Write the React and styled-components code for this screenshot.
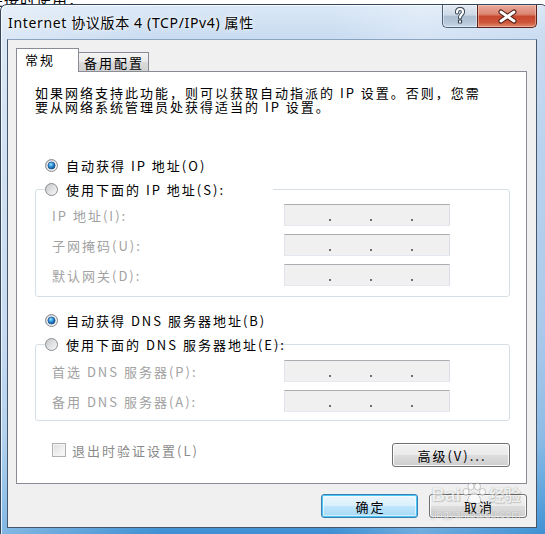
import React from 'react';
import styled, { createGlobalStyle, css } from 'styled-components';

const GlobalStyle = createGlobalStyle`
  html, body { margin: 0; padding: 0; background: #ffffff; }
  body {
    width: 545px; height: 534px; overflow: hidden;
    font-family: "Noto Sans CJK SC", "Noto Sans", sans-serif;
  }
`;

const Desktop = styled.div`
  position: relative;
  width: 545px;
  height: 534px;
  overflow: hidden;
  background: #ffffff;
`;

const BehindText = styled.div`
  position: absolute;
  left: -12px;
  top: -12px;
  font-size: 15px;
  letter-spacing: 1px;
  color: #000;
  white-space: nowrap;
`;

const Window = styled.div`
  position: absolute;
  left: 0;
  top: 4px;
  width: 548px;
  height: 545px;
  box-sizing: border-box;
  border: 1px solid #33465c;
  border-radius: 7px 7px 0 0;
  background:
    linear-gradient(90deg, rgba(255,255,255,0.35) 0px, rgba(255,255,255,0) 160px, rgba(255,255,255,0) 330px, rgba(255,255,255,0.25) 420px, rgba(255,255,255,0) 548px),
    linear-gradient(180deg, #dbe8f6 0px, #c8dbf1 34px, #bad2ee 140px, #a9c8ea 330px, #8cbbe6 430px, #5ea4dd 490px, #3f90d3 528px);
  box-shadow: inset 1px 1px 0 rgba(255,255,255,0.75);
  display: flex;
  flex-direction: column;
`;

const TitleBar = styled.div`
  height: 34px;
  display: flex;
  justify-content: space-between;
  padding-left: 7px;
`;

const TitleText = styled.div`
  align-self: center;
  font-family: "Noto Sans", "Noto Sans CJK SC", sans-serif;
  font-size: 14px;
  letter-spacing: 0.65px;
  color: #000;
  white-space: nowrap;
  text-shadow: 0 0 6px rgba(255,255,255,0.9), 0 0 2px rgba(255,255,255,0.9);
  margin-top: -1px;
`;

const CaptionButtons = styled.div`
  display: flex;
  align-self: flex-start;
  margin-right: 10px;
`;

const CaptionButton = styled.div`
  box-sizing: border-box;
  height: 23px;
  display: flex;
  align-items: center;
  justify-content: center;
  border: 1px solid;
  border-top: none;
  ${(p) =>
    p.$close
      ? css`
          width: 60px;
          border-color: #5e2218;
          border-radius: 0 0 5px 0;
          background: linear-gradient(180deg, #e9aa9c 0%, #dc8571 42%, #c8482f 52%, #cc5438 78%, #e08a6e 100%);
          box-shadow: inset 0 0 0 1px rgba(255,220,210,0.45);
        `
      : css`
          width: 35px;
          border-color: #4f5f75;
          border-right: none;
          border-radius: 0 0 0 5px;
          background: linear-gradient(180deg, #e3ebf4 0%, #cdd9e6 45%, #aebfd3 52%, #b6c7da 80%, #cbd9e8 100%);
          box-shadow: inset 0 0 0 1px rgba(255,255,255,0.45);
        `}
`;

const Client = styled.div`
  box-sizing: border-box;
  margin: 0 10px 0 6px;
  height: 489px;
  border: 1px solid #46576c;
  border-top-color: #8aa3bf;
  background: #f0f0f0;
  display: flex;
  flex-direction: column;
  padding: 8px 9px 9px 8px;
`;

const TabStrip = styled.div`
  position: relative;
  z-index: 1;
  height: 23px;
  display: flex;
  align-items: flex-end;
`;

const textBase = css`
  font-family: "Noto Sans CJK SC", sans-serif;
  font-size: 13px;
  letter-spacing: 2px;
  white-space: nowrap;
`;

const Tab = styled.div`
  ${textBase};
  box-sizing: border-box;
  border: 1px solid #898c95;
  border-bottom: none;
  display: flex;
  align-items: center;
  color: #000;
  ${(p) =>
    p.$active
      ? css`
          width: 63px;
          height: 24px;
          margin-bottom: -1px;
          padding: 0 0 3px 8px;
          background: #ffffff;
        `
      : css`
          width: 71px;
          height: 19px;
          margin-left: -1px;
          padding: 0 0 0 5px;
          background: linear-gradient(180deg, #f4f4f4 0%, #e9e9e9 50%, #dadada 52%, #d2d2d2 100%);
        `}
`;

const Panel = styled.div`
  box-sizing: border-box;
  height: 413px;
  border: 1px solid #898c95;
  background: #ffffff;
  padding: 14px 16px 0 18px;
  display: flex;
  flex-direction: column;
`;

const Description = styled.div`
  ${textBase};
  line-height: 14px;
  color: #000;
  margin-bottom: 39px;
`;

const RadioRow = styled.div`
  ${textBase};
  height: 24px;
  display: flex;
  align-items: center;
  gap: 8px;
  padding-left: 10px;
  color: #000;
  margin-top: ${(p) => p.$mt || 0}px;
`;

const GroupBox = styled.fieldset`
  margin: 0;
  min-inline-size: 0;
  border: 1px solid #d5dfe5;
  border-radius: 3px;
  padding: ${(p) => p.$pt}px 0 ${(p) => p.$pb}px 9px;
`;

const GroupLegend = styled.legend`
  ${textBase};
  box-sizing: border-box;
  width: 228px;
  height: 24px;
  padding: 0;
  display: flex;
  align-items: center;
  gap: 8px;
  color: #000;
  background: #fff;
`;

const FieldGrid = styled.div`
  display: grid;
  grid-template-columns: 232px 166px;
  row-gap: 8px;
  align-items: center;
  padding-left: 7px;
`;

const FieldLabel = styled.div`
  ${textBase};
  color: #a2a2a2;
`;

const IPField = styled.div`
  box-sizing: border-box;
  height: 22px;
  border: 1px solid;
  border-color: #abadb3 #dbdfe6 #e3e9ef #e2e3ea;
  background: #f0f0f0;
  display: flex;
  padding-left: 5px;
`;

const Octet = styled.div`
  width: 39px;
  flex: 0 0 39px;
`;

const Dot = styled.div`
  width: 2px;
  height: 2px;
  flex: 0 0 2px;
  margin-top: 14px;
  background: #6f6f6f;
`;

const BottomRow = styled.div`
  margin-top: 22px;
  display: flex;
  justify-content: space-between;
  align-items: flex-start;
  padding-left: 17px;
`;

const CheckRow = styled.div`
  ${textBase};
  height: 14px;
  display: flex;
  align-items: center;
  gap: 6px;
  color: #8a8a8a;
`;

const CheckBox = styled.div`
  box-sizing: border-box;
  width: 14px;
  height: 14px;
  border: 1px solid #b1b1b1;
  background: linear-gradient(135deg, #dedede 0%, #f0f0f0 60%, #fbfbfb 100%);
  box-shadow: inset 0 0 0 1px #f4f4f4;
`;

const Button = styled.div`
  ${textBase};
  box-sizing: border-box;
  width: ${(p) => p.$w}px;
  height: 24px;
  border: 1px solid #707070;
  border-radius: 3px;
  display: flex;
  align-items: center;
  justify-content: center;
  padding-left: 2px;
  color: #000;
  background: linear-gradient(180deg, #f2f2f2 0%, #ebebeb 49%, #dddddd 51%, #cfcfcf 100%);
  box-shadow: inset 0 0 0 1px rgba(255,255,255,0.85);
  ${(p) =>
    p.$primary &&
    css`
      border-color: #3c7fb1;
      background: linear-gradient(180deg, #eaf6fd 0%, #d9f0fc 49%, #bee6fd 51%, #a7d9f5 100%);
      box-shadow: inset 0 0 0 1px #48c6f5, inset 0 0 0 2px rgba(255,255,255,0.5);
    `}
`;

const ButtonRow = styled.div`
  margin-top: 10px;
  display: flex;
  justify-content: flex-end;
  gap: 11px;
`;

const Watermark = styled.div`
  position: absolute;
  left: 426px;
  top: 470px;
  width: 100px;
  display: flex;
  flex-direction: column;
  align-items: center;
  pointer-events: none;
  opacity: 0.7;
`;

const WatermarkLogo = styled.div`
  display: flex;
  align-items: flex-end;
  height: 36px;
  font-family: "Liberation Sans", sans-serif;
  font-weight: bold;
  font-size: 19px;
  color: rgba(255,255,255,0.9);
  text-shadow: 0 0 1px rgba(0,0,0,0.45), 1px 1px 1px rgba(0,0,0,0.2);
`;

const WatermarkCJK = styled.span`
  font-family: "Noto Sans CJK SC", sans-serif;
  font-size: 16px;
  margin-left: 2px;
`;

const WatermarkUrl = styled.div`
  font-family: "Liberation Sans", sans-serif;
  font-size: 11px;
  margin-top: 2px;
  color: rgba(255,255,255,0.9);
  text-shadow: 0 0 1px rgba(0,0,0,0.5);
`;

const RadioIcon = ({ checked }) => (
  <svg width="13" height="13" viewBox="0 0 13 13" style={{ flex: '0 0 13px' }}>
    <defs>
      <linearGradient id="rbg" x1="0" y1="0" x2="1" y2="1">
        <stop offset="0" stopColor="#c4c6ca" />
        <stop offset="1" stopColor="#fbfbfb" />
      </linearGradient>
      <radialGradient id="rdot" cx="0.4" cy="0.35" r="0.75">
        <stop offset="0" stopColor="#9be2ff" />
        <stop offset="0.45" stopColor="#2b8fd8" />
        <stop offset="1" stopColor="#0b3a74" />
      </radialGradient>
    </defs>
    <circle cx="6.5" cy="6.5" r="6" fill="url(#rbg)" stroke="#8a8c90" strokeWidth="1" />
    <circle cx="6.5" cy="6.5" r="4.6" fill={checked ? '#f8f8f8' : 'none'} />
    {checked && <circle cx="6.5" cy="6.5" r="3.6" fill="url(#rdot)" stroke="#1b4a82" strokeWidth="0.7" />}
  </svg>
);

const HelpIcon = () => (
  <svg width="12" height="18" viewBox="0 0 12 18">
    <path d="M3 5.5 C3 2.5 4.5 2 6 2 C8 2 9 3.3 9 5 C9 7.3 6 7.6 6 10.5" fill="none" stroke="#3b4656" strokeWidth="4.2" strokeLinecap="round" />
    <rect x="3.9" y="12.6" width="4.2" height="4" rx="0.8" fill="#3b4656" />
    <path d="M3 5.5 C3 2.5 4.5 2 6 2 C8 2 9 3.3 9 5 C9 7.3 6 7.6 6 10.5" fill="none" stroke="#ffffff" strokeWidth="2.2" strokeLinecap="round" />
    <rect x="5" y="13.6" width="2" height="2" fill="#ffffff" />
  </svg>
);

const CloseIcon = () => (
  <svg width="21" height="15" viewBox="0 0 21 15">
    <path d="M4 3 L17 12 M17 3 L4 12" stroke="#4a1a12" strokeWidth="5" strokeLinecap="round" />
    <path d="M4 3 L17 12 M17 3 L4 12" stroke="#ffffff" strokeWidth="3" strokeLinecap="round" />
  </svg>
);

const PawIcon = () => (
  <svg width="26" height="24" viewBox="0 0 26 24">
    <g fill="rgba(255,255,255,0.9)" stroke="rgba(0,0,0,0.35)" strokeWidth="0.8">
      <ellipse cx="5" cy="10" rx="3" ry="3.6" />
      <ellipse cx="10" cy="4.5" rx="3" ry="3.6" />
      <ellipse cx="16.5" cy="4.5" rx="3" ry="3.6" />
      <ellipse cx="21.5" cy="10" rx="3" ry="3.6" />
      <path d="M13 11 C9 11 6 17 7 20 C8 23 11 21 13 21 C15 21 18 23 19.5 20 C20.5 17 17 11 13 11 Z" />
    </g>
  </svg>
);

const IPBox = () => (
  <IPField>
    <Octet />
    <Dot />
    <Octet />
    <Dot />
    <Octet />
    <Dot />
    <Octet />
  </IPField>
);

export default function App() {
  return (
    <Desktop>
      <GlobalStyle />
      <BehindText>连接时使用：</BehindText>
      <Window>
        <TitleBar>
          <TitleText>Internet 协议版本 4 (TCP/IPv4) 属性</TitleText>
          <CaptionButtons>
            <CaptionButton>
              <HelpIcon />
            </CaptionButton>
            <CaptionButton $close>
              <CloseIcon />
            </CaptionButton>
          </CaptionButtons>
        </TitleBar>
        <Client>
          <TabStrip>
            <Tab $active>常规</Tab>
            <Tab>备用配置</Tab>
          </TabStrip>
          <Panel>
            <Description>
              如果网络支持此功能，则可以获取自动指派的 IP 设置。否则，您需
              <br />
              要从网络系统管理员处获得适当的 IP 设置。
            </Description>

            <RadioRow>
              <RadioIcon checked />
              自动获得 IP 地址(O)
            </RadioRow>
            <GroupBox $pt={3} $pb={10}>
              <GroupLegend>
                <RadioIcon />
                使用下面的 IP 地址(S):
              </GroupLegend>
              <FieldGrid>
                <FieldLabel>IP 地址(I):</FieldLabel>
                <IPBox />
                <FieldLabel>子网掩码(U):</FieldLabel>
                <IPBox />
                <FieldLabel>默认网关(D):</FieldLabel>
                <IPBox />
              </FieldGrid>
            </GroupBox>

            <RadioRow $mt={11}>
              <RadioIcon checked />
              自动获得 DNS 服务器地址(B)
            </RadioRow>
            <GroupBox $pt={4} $pb={8}>
              <GroupLegend>
                <RadioIcon />
                使用下面的 DNS 服务器地址(E):
              </GroupLegend>
              <FieldGrid>
                <FieldLabel>首选 DNS 服务器(P):</FieldLabel>
                <IPBox />
                <FieldLabel>备用 DNS 服务器(A):</FieldLabel>
                <IPBox />
              </FieldGrid>
            </GroupBox>

            <BottomRow>
              <CheckRow>
                <CheckBox />
                退出时验证设置(L)
              </CheckRow>
              <Button $w={118}>高级(V)...</Button>
            </BottomRow>
          </Panel>
          <ButtonRow>
            <Button $w={97} $primary>确定</Button>
            <Button $w={98}>取消</Button>
          </ButtonRow>
        </Client>
      </Window>
      <Watermark>
        <WatermarkLogo>
          Bai
          <PawIcon />
          <WatermarkCJK>经验</WatermarkCJK>
        </WatermarkLogo>
        <WatermarkUrl>jingyan.baidu.com</WatermarkUrl>
      </Watermark>
    </Desktop>
  );
}
